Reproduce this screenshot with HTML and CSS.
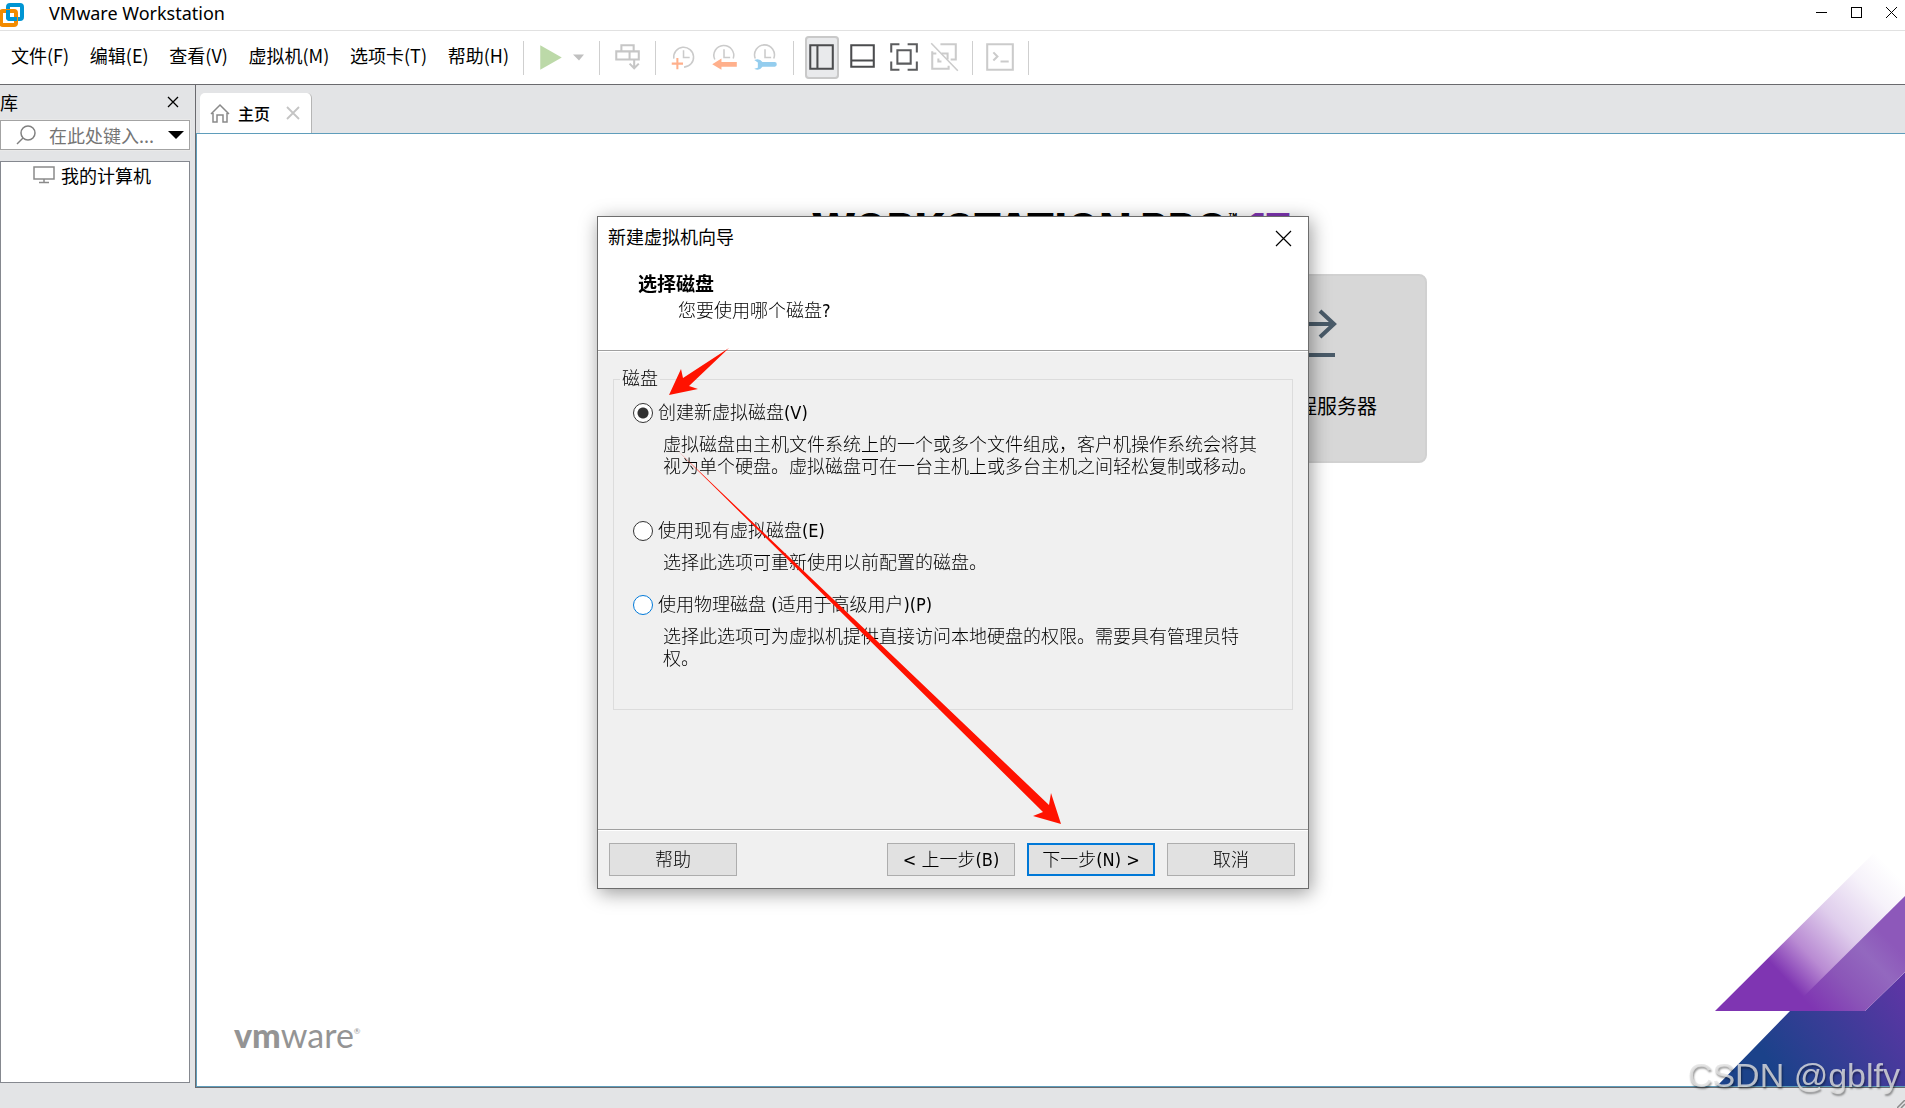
FILE: index.html
```html
<!DOCTYPE html>
<html lang="zh-CN">
<head>
  <meta charset="UTF-8">
  <meta name="viewport" content="width=device-width, initial-scale=1.0">
  <title>VMware Workstation</title>
  <link rel="stylesheet" href="styles.css">
</head>
<body>

  <!-- Title bar -->
  <header class="titlebar">
    <svg class="app-logo" width="25" height="26" viewBox="0 0 25 26" fill="none" stroke-width="4">
      <rect x="8" y="3" width="14" height="14" rx="2" stroke="#0095d3"/>
      <rect x="1" y="9" width="15" height="14" rx="2" stroke="#f38b00"/>
      <path d="M8 8v7q0 2 2 2h7" stroke="#0095d3"/>
    </svg>
    <span class="app-name">VMware Workstation</span>
    <div class="window-buttons">
      <button aria-label="最小化"><svg width="13" height="13"><path d="M1 6.500h11" stroke="#000"/></svg></button>
      <button aria-label="最大化"><svg width="13" height="13"><rect x="1.500" y="1.500" width="10" height="10" fill="none" stroke="#000"/></svg></button>
      <button aria-label="关闭"><svg width="13" height="13"><path d="M1 1l11 11M12 1L1 12" stroke="#000"/></svg></button>
    </div>
  </header>

  <!-- Menu and toolbar -->
  <nav class="toolbar">
    <div class="menu">
      <button>文件(F)</button>
      <button>编辑(E)</button>
      <button>查看(V)</button>
      <button>虚拟机(M)</button>
      <button>选项卡(T)</button>
      <button>帮助(H)</button>
    </div>
    <span class="sep"></span>
    <button class="tool" aria-label="开机"><svg viewBox="0 0 40 42"><path d="M10 9v24l21-12z" fill="#bcd9a8"/></svg></button>
    <button class="tool caret" aria-label="电源选项"><svg viewBox="0 0 20 42"><path d="M2 18h11l-5 6z" fill="#c0c0c0"/></svg></button>
    <span class="sep"></span>
    <button class="tool" aria-label="发送">
      <svg viewBox="0 0 40 42" fill="none" stroke="#c6c6c6" stroke-width="2">
        <path d="M15 15V9h12v6M10 15h22v8H10zM23 15v8M27.500 23v8M23 27l4.500 4.500L32 27"/>
      </svg>
    </button>
    <span class="sep"></span>
    <button class="tool" aria-label="拍摄快照">
      <svg viewBox="0 0 40 42" fill="none" stroke="#cbcbcb" stroke-width="1.500">
        <path d="M11.500 22a9.700 9.700 0 1 1 10 8.400M21 14v7h6"/>
        <path d="M9.500 27h11M15 21.500v11" stroke="#ffb08c" stroke-width="2"/>
      </svg>
    </button>
    <button class="tool" aria-label="恢复快照">
      <svg viewBox="0 0 40 42" fill="none" stroke="#cbcbcb" stroke-width="1.500">
        <path d="M11.500 23a9.700 9.700 0 1 1 18-1M20.500 13v8h6"/>
        <path d="M9 27.500l9-5.500v3.500h15v4.500H18v3z" fill="#ffb08c" stroke="none"/>
      </svg>
    </button>
    <button class="tool" aria-label="管理快照">
      <svg viewBox="0 0 40 42" fill="none" stroke="#cbcbcb" stroke-width="1.500">
        <path d="M11 22a9.700 9.700 0 1 1 18 0M20.500 13v8h6"/>
        <path d="M10 23.500q5-2.500 8 2H30q2 0 2 2.200t-2 2.300H18q-3 4.500-8 2l3.500-1v-5z" fill="#94cdee" stroke="none"/>
      </svg>
    </button>
    <span class="sep"></span>
    <button class="tool pressed" aria-label="显示库">
      <svg viewBox="0 0 40 42" fill="none" stroke="#4b4c4e" stroke-width="2"><path d="M10 9h22v23H10zM17 9v23"/></svg>
    </button>
    <button class="tool" aria-label="显示缩略图栏">
      <svg viewBox="0 0 40 42" fill="none" stroke="#4b4c4e" stroke-width="2"><path d="M10 9h22v21H10zM10 24h22"/></svg>
    </button>
    <button class="tool" aria-label="全屏">
      <svg viewBox="0 0 40 42" fill="none" stroke="#5b5c5e" stroke-width="2">
        <path d="M9 16V8h8M25 8h9v8M34 25v8h-9M17 33H9v-8M15 14h13v13H15z"/>
      </svg>
    </button>
    <button class="tool" aria-label="Unity">
      <svg viewBox="0 0 40 42" fill="none" stroke="#cbcbcb" stroke-width="2">
        <path d="M17 8h15v15h-5M9 15v17h16v-3M9 17h4M15 22v3h3M18 17h6v6"/>
        <path d="M8 7l26 27" stroke-width="1.500"/>
      </svg>
    </button>
    <span class="sep"></span>
    <button class="tool" aria-label="控制台视图">
      <svg viewBox="0 0 40 42" fill="none" stroke="#cbcbcb" stroke-width="2"><path d="M8 8h25v25H8zM14 16l4 4-4 4M21 25h8"/></svg>
    </button>
    <span class="sep"></span>
  </nav>

  <div class="workspace">
    <!-- Library -->
    <aside class="library">
      <div class="library-head">
        <span>库</span>
        <button aria-label="关闭库"><svg width="12" height="12"><path d="M1 1l10 10M11 1L1 11" stroke="#000" stroke-width="1.300"/></svg></button>
      </div>
      <div class="search">
        <svg width="20" height="20" viewBox="0 0 20 20" fill="none" stroke="#808080" stroke-width="1.500"><circle cx="12" cy="8" r="7"/><path d="M7 13l-6 6"/></svg>
        <input type="text" placeholder="在此处键入..." aria-label="搜索">
        <button aria-label="搜索选项"><svg width="16" height="8"><path d="M0 0h16l-8 8z"/></svg></button>
      </div>
      <div class="tree">
        <a class="tree-item" href="#">
          <svg width="22" height="18" viewBox="0 0 22 18" fill="none" stroke="#8a8a8a" stroke-width="1.500"><path d="M1 1h20v12H1zM11 13v3M6 16.500h10"/></svg>
          我的计算机
        </a>
      </div>
    </aside>

    <!-- Home tab -->
    <main class="main">
      <div class="tabs">
        <div class="tab">
          <svg width="20" height="20" viewBox="0 0 20 20" fill="none" stroke="#8a8a8a" stroke-width="1.500"><path d="M1 11l9-9 9 9M3 10v9h4v-7h6v7h4v-9"/></svg>
          <span>主页</span>
          <button aria-label="关闭标签页"><svg width="14" height="14"><path d="M1 1l12 12M13 1L1 13" stroke="#c4c4c4" stroke-width="1.800"/></svg></button>
        </div>
      </div>
      <div class="home">
        <h1 class="product">WORKSTATION PRO<sup>™</sup> <b>17</b></h1>
        <div class="tiles">
          <button class="tile">
            <svg width="60" height="60" viewBox="0 0 60 60" fill="none" stroke="#4a5b69" stroke-width="4"><path d="M2 23h54M43 10l14 13-14 13M2 54h56"/></svg>
            <span>连接远程服务器</span>
          </button>
        </div>
        <div class="brand"><b>vm</b>ware<sup>®</sup></div>
        <svg class="decor" width="200" height="270" viewBox="0 0 200 270">
          <defs>
            <linearGradient id="fade" gradientUnits="userSpaceOnUse" x1="80" y1="162" x2="190" y2="57">
              <stop offset="0" stop-color="#7f35b2"/>
              <stop offset="0.220" stop-color="#b98bd3"/>
              <stop offset="0.500" stop-color="#dfcdec"/>
              <stop offset="0.800" stop-color="#f6f2fa"/>
              <stop offset="1" stop-color="#fff"/>
            </linearGradient>
            <linearGradient id="deep" gradientUnits="userSpaceOnUse" x1="60" y1="240" x2="200" y2="140">
              <stop offset="0" stop-color="#1b428a"/>
              <stop offset="1" stop-color="#6534a8"/>
            </linearGradient>
            <linearGradient id="band" gradientUnits="userSpaceOnUse" x1="105" y1="190" x2="180" y2="120">
              <stop offset="0" stop-color="#7f35b2"/>
              <stop offset="0.400" stop-color="#8b56b8"/>
              <stop offset="0.750" stop-color="#9368bf"/>
              <stop offset="1" stop-color="#8d58ba"/>
            </linearGradient>
          </defs>
          <path d="M85 195L12 270h188V156l-40 39z" fill="url(#deep)"/>
          <path d="M10 195L200 6v150l-40 39z" fill="url(#fade)"/>
          <path d="M84 195L200 80v76l-40 39z" fill="url(#band)"/>
        </svg>
      </div>
    </main>
  </div>

  <footer class="statusbar">
    <svg width="8" height="8"><path d="M0 8l8-8M4 8l4-4" stroke="#8a8a8a" stroke-width="1.500"/></svg>
  </footer>

  <!-- New virtual machine wizard -->
  <div class="overlay">
    <form class="dialog" role="dialog" aria-labelledby="dialogTitle">
      <div class="dialog-head">
        <div class="dialog-title">
          <span id="dialogTitle">新建虚拟机向导</span>
          <button type="button" aria-label="关闭"><svg width="17" height="17"><path d="M1 1l15 15M16 1L1 16" stroke="#000" stroke-width="1.200"/></svg></button>
        </div>
        <h2>选择磁盘</h2>
        <p>您要使用哪个磁盘?</p>
      </div>
      <div class="dialog-body">
        <fieldset>
          <legend>磁盘</legend>
          <div class="option tall">
            <label><input type="radio" name="disk" checked>创建新虚拟磁盘(V)</label>
            <p>虚拟磁盘由主机文件系统上的一个或多个文件组成，客户机操作系统会将其视为单个硬盘。虚拟磁盘可在一台主机上或多台主机之间轻松复制或移动。</p>
          </div>
          <div class="option">
            <label><input type="radio" name="disk">使用现有虚拟磁盘(E)</label>
            <p>选择此选项可重新使用以前配置的磁盘。</p>
          </div>
          <div class="option">
            <label><input type="radio" name="disk" class="hot">使用物理磁盘 (适用于高级用户)(P)</label>
            <p>选择此选项可为虚拟机提供直接访问本地硬盘的权限。需要具有管理员特权。</p>
          </div>
        </fieldset>
      </div>
      <div class="dialog-foot">
        <button type="button" class="help">帮助</button>
        <button type="button">&lt; 上一步(B)</button>
        <button type="button" class="default">下一步(N) &gt;</button>
        <button type="button">取消</button>
      </div>
      <svg class="arrows" width="712" height="673" viewBox="0 0 712 673" fill="#ff1200">
        <path d="M71 178l12-26 2 9 46-30-40 38 9 3z"/>
        <path d="M79 233L451 588l2-12 10 31-28-8 10-4z"/>
      </svg>
    </form>
  </div>

  <div class="watermark">CSDN @gblfy</div>

</body>
</html>
```
FILE: styles.css
```css
* {
  box-sizing: border-box;
}
body {
  margin: 0;
  min-height: 100vh;
  display: flex;
  flex-direction: column;
  background: #e3e4e6;
  color: #000;
  font-family: "Noto Sans CJK SC", sans-serif;
  font-size: 18px;
  line-height: 22px;
  overflow: hidden;
}
button {
  padding: 0;
  border: none;
  background: none;
  color: inherit;
  font: inherit;
}
svg {
  display: block;
  flex: none;
}
h1, h2, p {
  margin: 0;
}

/* Title bar */
.titlebar {
  height: 31px;
  display: flex;
  align-items: center;
  background: #fff;
  border-bottom: 1px solid #e1e1e1;
}
.app-logo {
  margin-right: 24px;
}
.app-name {
  flex: 1;
  font-family: "Noto Sans", sans-serif;
  padding-bottom: 4px;
}
.window-buttons {
  display: flex;
  gap: 22px;
  padding: 0 7px 5px 0;
}

/* Toolbar */
.toolbar {
  height: 54px;
  display: flex;
  align-items: center;
  background: #fff;
  border-bottom: 1px solid #6a6a6e;
}
.menu {
  flex: 0 0 515px;
  display: flex;
  justify-content: space-between;
  padding: 0 6px 6px 11px;
  white-space: nowrap;
}
.sep {
  width: 1px;
  height: 34px;
  margin: 0 6px 0 8px;
  background: #cfcfcf;
}
.tool {
  width: 41px;
  height: 43px;
}
.tool svg {
  width: 100%;
  height: 100%;
}
.tool.caret {
  width: 20px;
}
.tool.pressed {
  background: #e9eaec;
  box-shadow: inset 0 0 0 2px #c9c9c9;
  border-radius: 4px;
  width: 34px;
  margin: 0 2px 0 5px;
}
.tool.pressed svg {
  width: 41px;
  margin-left: -5px;
}

/* Library */
.workspace {
  flex: 1;
  display: flex;
  gap: 5px;
}
.library {
  flex: 0 0 190px;
  min-width: 0;
  display: flex;
  flex-direction: column;
  padding-bottom: 5px;
}
.library-head {
  height: 35px;
  display: flex;
  align-items: center;
  justify-content: space-between;
  padding: 0 11px 2px 0;
}
.search {
  height: 30px;
  display: flex;
  align-items: center;
  padding: 0 5px 0 15px;
  background: #fff;
  border: 1px solid #a3a3a3;
  outline: 1px solid #e9e9e9;
}
.search input {
  flex: 1;
  min-width: 0;
  padding: 0 0 0 13px;
  border: none;
  outline: none;
  background: none;
  font: inherit;
}
.search input::placeholder {
  color: #757575;
}
.tree {
  flex: 1;
  margin-top: 11px;
  padding: 2px 0 0 32px;
  background: #fff;
  border: 1px solid #85888f;
}
.tree-item {
  display: flex;
  align-items: center;
  gap: 6px;
  color: #000;
  text-decoration: none;
}

/* Main area */
.main {
  flex: 1;
  min-width: 0;
  display: flex;
  flex-direction: column;
  border-left: 1px solid #6a6a6e;
  border-bottom: 1px solid #6a6a6e;
}
.tabs {
  height: 48px;
  display: flex;
  align-items: flex-end;
  padding-left: 4px;
}
.tab {
  height: 40px;
  display: flex;
  align-items: center;
  padding: 0 11px 0 10px;
  background: #fff;
  border-right: 1px solid #b5b5b5;
  border-radius: 5px 5px 0 0;
}
.tab span {
  margin: 0 16px 0 8px;
  font-size: 16px;
  font-weight: 500;
}
.home {
  position: relative;
  flex: 1;
  background: #fff;
  border: 1px solid #5f9dbb;
  border-right: none;
}
.product {
  padding-top: 71px;
  text-align: center;
  font-family: Inter, sans-serif;
  font-size: 42px;
  line-height: 48px;
  font-weight: 800;
}
.product sup {
  font-size: 14px;
  line-height: 14px;
  vertical-align: 20px;
}
.product b {
  color: #7f35b2;
}
.tiles {
  width: 752px;
  margin: 21px auto 0;
  display: flex;
  justify-content: flex-end;
}
.tile {
  width: 240px;
  height: 189px;
  display: flex;
  flex-direction: column;
  align-items: center;
  gap: 34px;
  padding-top: 25px;
  background: #d7d7d7;
  border: 2px solid #d1d1d1;
  border-radius: 8px;
  font-size: 20px;
}
.brand {
  position: absolute;
  left: 37px;
  bottom: 29px;
  color: #949494;
  font-family: Lato, sans-serif;
  font-size: 34px;
  line-height: 44px;
}
.brand b {
  font-weight: 900;
}
.brand sup {
  font-size: 8px;
  vertical-align: 14px;
}
.decor {
  position: absolute;
  right: 0;
  bottom: 0;
}
.statusbar {
  height: 20px;
  display: flex;
  align-items: flex-end;
  justify-content: flex-end;
}

/* Wizard */
.overlay {
  position: fixed;
  inset: 0;
  display: flex;
  align-items: center;
  justify-content: center;
  padding: 0 0 3px 1px;
}
.dialog {
  position: relative;
  width: 712px;
  display: flex;
  flex-direction: column;
  background: #f0f0f0;
  border: 1px solid #6d6d6d;
  box-shadow: 2px 4px 18px rgba(0, 0, 0, 0.4);
  font-family: "DejaVu Sans Condensed", "Liberation Sans", "Noto Sans CJK SC", sans-serif;
  font-weight: 300;
}
.dialog-head {
  height: 134px;
  background: #fff;
  border-bottom: 1px solid #a0a0a0;
}
.dialog-title {
  display: flex;
  align-items: center;
  justify-content: space-between;
  padding: 10px 16px 0 10px;
  font-weight: 400;
}
.dialog-head h2 {
  padding: 24px 0 0 40px;
  font-size: 19px;
  line-height: 22px;
}
.dialog-head p {
  padding: 5px 0 0 80px;
}
.dialog-body {
  border-top: 1px solid #fff;
  padding: 16px 15px 119px;
}
fieldset {
  height: 342px;
  margin: 0;
  padding: 12px 0 0 19px;
  border: 1px solid #dcdcdc;
}
legend {
  margin-left: -13px;
  padding: 0 2px;
}
.option {
  height: 74px;
}
.option.tall {
  height: 118px;
}
.option label {
  display: flex;
  align-items: center;
  gap: 5px;
}
.option p {
  width: 600px;
  padding: 10px 0 0 30px;
  box-sizing: content-box;
}
.option input {
  appearance: none;
  width: 20px;
  height: 20px;
  margin: 0;
  background: #fff;
  border: 1px solid #333;
  border-radius: 50%;
}
.option input:checked {
  background: radial-gradient(circle, #333 5px, #fff 6px);
}
.option input.hot {
  border-color: #0078d7;
}
.dialog-foot {
  display: flex;
  gap: 12px;
  padding: 13px 13px 12px 11px;
  border-top: 1px solid #a0a0a0;
  box-shadow: inset 0 1px #fff;
}
.dialog-foot button {
  width: 128px;
  height: 33px;
  background: #e1e1e1;
  border: 1px solid #adadad;
}
.dialog-foot .help {
  margin-right: auto;
}
.dialog-foot .default {
  border: 2px solid #0078d7;
}

/* Annotations */
.arrows {
  position: absolute;
  left: 0;
  top: 0;
  pointer-events: none;
}
.watermark {
  position: fixed;
  right: 5px;
  bottom: 13px;
  color: rgba(225, 225, 225, 0.8);
  font-family: "Liberation Sans", sans-serif;
  font-size: 34px;
  line-height: 40px;
  text-shadow: 1px 2px 2px rgba(0, 0, 0, 0.4);
}
```
